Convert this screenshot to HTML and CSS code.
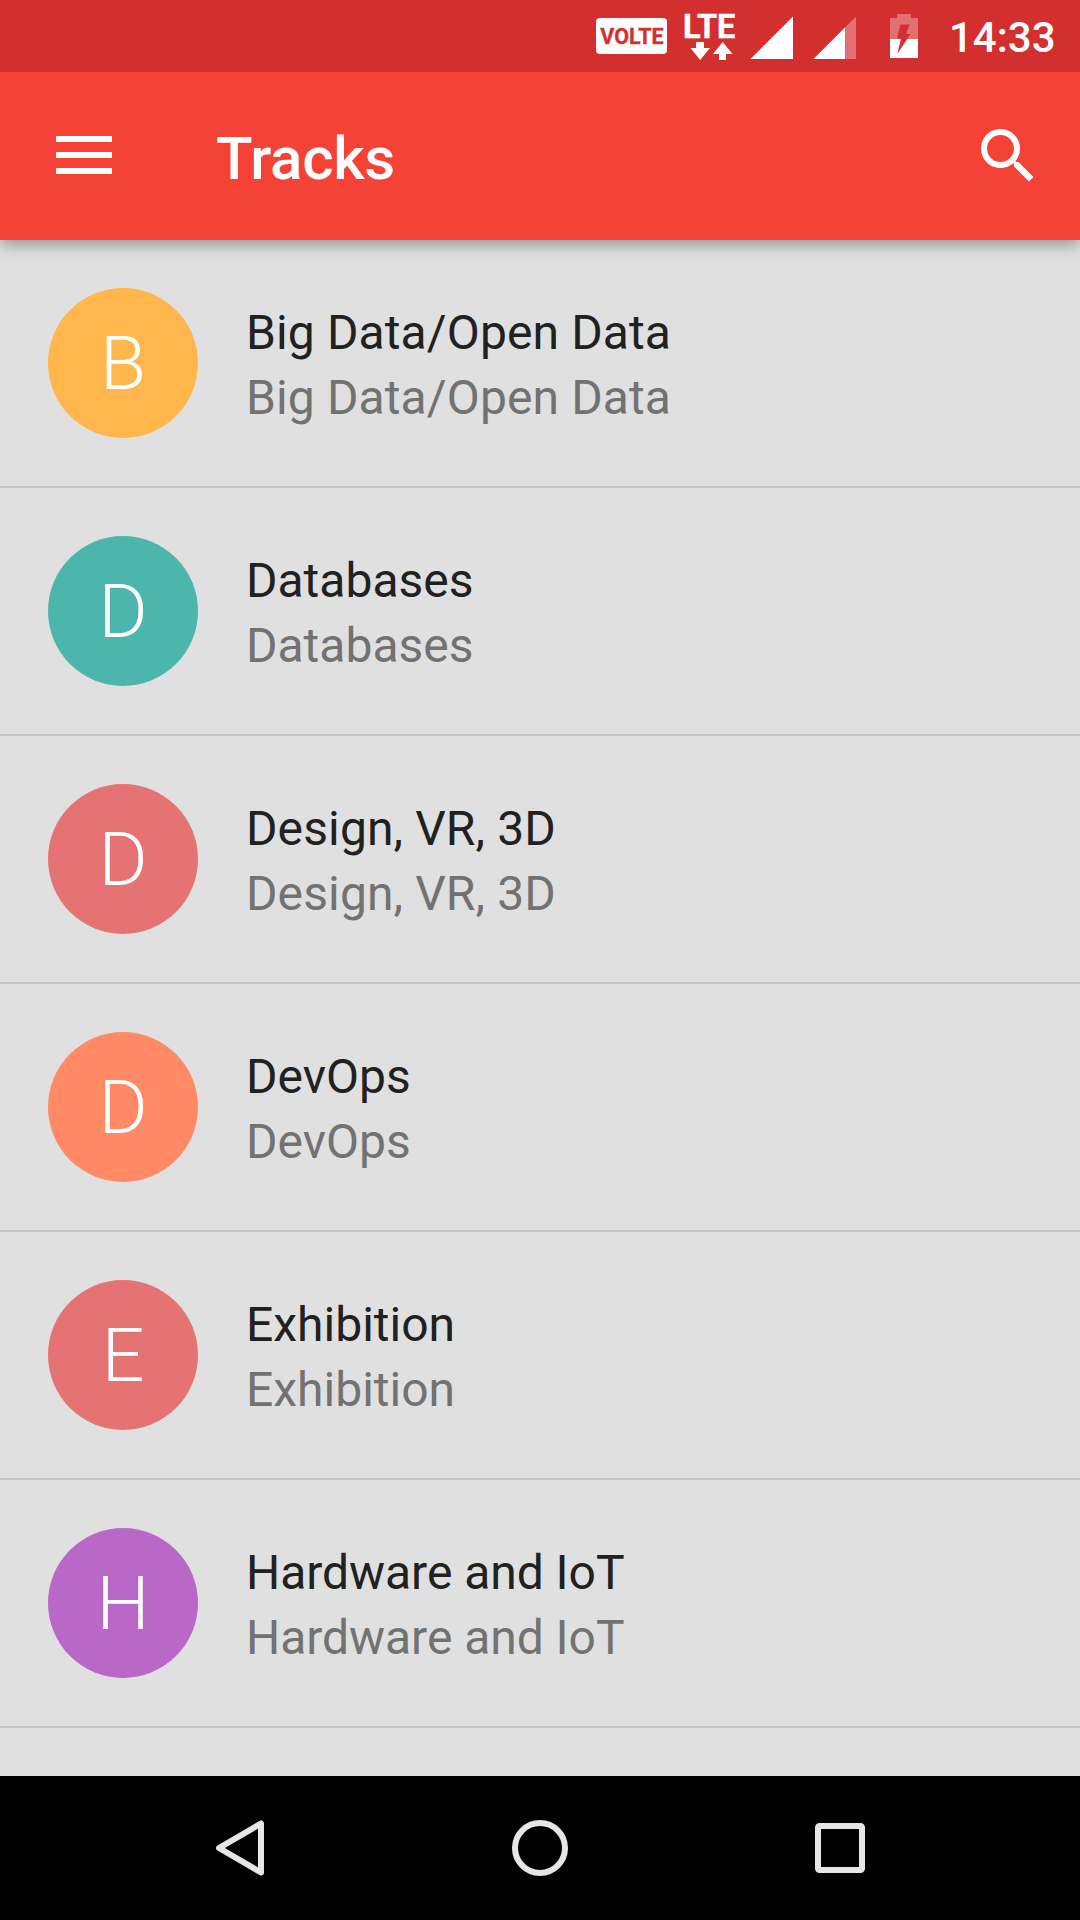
FILE: index.html
```html
<!DOCTYPE html>
<html lang="en">
<head>
<meta charset="utf-8">
<title>Tracks</title>
<link rel="stylesheet" href="styles.css">
</head>
<body>
<div class="screen">
  <div class="status-bar">
    <span class="volte">VOLTE</span>
    <div class="lte">
      <span class="lte-label">LTE</span>
      <svg class="lte-arrows" width="43" height="18" viewBox="0 0 43 18"><path d="M6 0h8v6h6L10.200 18 0.500 6H6zM32.700 0L42.500 12H36v6h-7v-6h-6z" fill="#fff"/></svg>
    </div>
    <svg class="signal" width="43" height="43" viewBox="0 0 43 43"><path d="M0.500 43L43 0.500V43z" fill="#fff"/></svg>
    <svg class="signal-partial" width="43" height="43" viewBox="0 0 43 43"><path d="M0.500 43L43 0.500V43z" fill="#e27071"/><path d="M0.500 43L32 11.500V43z" fill="#fff"/></svg>
    <svg class="battery" width="28" height="44" viewBox="0 0 28 44"><path d="M7 0h14v4h7v21H0V4h7z" fill="#e27071"/><path d="M0 25h28v19H0z" fill="#fff"/><path d="M10.500 10.500h9L16 20h4.500L7.300 40l3.700-15.500H7z" fill="#d32f2f"/></svg>
    <span class="clock">14:33</span>
  </div>
  <header class="app-bar">
    <svg class="menu" width="56" height="38" viewBox="0 0 56 38"><path d="M0 0h56v6H0zM0 16h56v6H0zM0 32h56v6H0z" fill="#fff"/></svg>
    <h1 class="title">Tracks</h1>
    <svg class="search" width="72" height="72" viewBox="0 0 24 24"><path d="M15.500 14h-.79l-.28-.27C15.410 12.590 16 11.110 16 9.500 16 5.910 13.090 3 9.500 3S3 5.910 3 9.500 5.910 16 9.500 16c1.610 0 3.090-.59 4.230-1.570l.27.28v.79l5 4.990L20.490 19l-4.990-5zm-6 0C7.010 14 5 11.990 5 9.500S7.010 5 9.500 5 14 7.010 14 9.500 11.990 14 9.500 14z" fill="#fff"/></svg>
  </header>
  <main class="list">
    <div class="row"><div class="avatar amber">B</div><div class="text wide">
      <div class="name">Big Data/Open Data</div><div class="desc">Big Data/Open Data</div></div></div>
    <div class="row"><div class="avatar teal">D</div><div class="text"><div class="name">Databases</div><div class="desc">Databases</div></div></div>
    <div class="row"><div class="avatar red">D</div><div class="text wide"><div class="name">Design, VR, 3D</div><div class="desc">Design, VR, 3D</div></div></div>
    <div class="row"><div class="avatar orange">D</div><div class="text"><div class="name">DevOps</div><div class="desc">DevOps</div></div></div>
    <div class="row"><div class="avatar red">E</div><div class="text"><div class="name">Exhibition</div><div class="desc">Exhibition</div></div></div>
    <div class="row"><div class="avatar purple">H</div><div class="text tight"><div class="name">Hardware and IoT</div><div class="desc">Hardware and IoT</div></div></div>
  </main>
  <nav class="nav-bar">
    <svg width="60" height="60" viewBox="0 0 60 60"><path d="M51 5.500v49L9 30z"/></svg>
    <svg width="60" height="60" viewBox="0 0 60 60"><circle cx="30" cy="30" r="25"/></svg>
    <svg width="60" height="60" viewBox="0 0 60 60"><rect x="8" y="8" width="44" height="44" rx="1.500"/></svg>
  </nav>
</div>
</body>
</html>
```
FILE: styles.css
```css
* { box-sizing: border-box; }

body {
  margin: 0;
  font-family: Roboto, sans-serif;
}

svg { display: block; flex: none; }

.screen {
  display: flex;
  flex-direction: column;
  width: 1080px;
  height: 1920px;
  overflow: hidden;
  background: #e0e0e0;
}

.status-bar {
  position: relative;
  z-index: 2;
  display: flex;
  flex: none;
  height: 72px;
  padding-left: 596px;
  background: #d32f2f;
  color: #fff;
}

.volte {
  width: 71px;
  height: 36px;
  margin-top: 18px;
  padding-left: 1px;
  border-radius: 4px;
  background: #fff;
  color: #d32f2f;
  font-size: 21.5px;
  font-weight: 700;
  line-height: 37px;
  text-align: center;
  -webkit-text-stroke: 0.3px #d32f2f;
}

.lte {
  width: 54px;
  margin: 11px 0 0 16px;
}

.lte-label {
  display: block;
  height: 31px;
  font-size: 32.5px;
  font-weight: 700;
  line-height: 32px;
  -webkit-text-stroke: 0.4px #fff;
}

.lte-arrows { margin-left: 7px; }

.signal { margin: 16px 0 0 13px; }
.signal-partial { margin: 16px 0 0 20px; }
.battery { margin: 14px 0 0 34px; }

.clock {
  margin-left: 31px;
  font-size: 42px;
  font-weight: 500;
  line-height: 75px;
}

.app-bar {
  position: relative;
  display: flex;
  align-items: center;
  flex: none;
  height: 168px;
  padding: 0 36px 0 56px;
  background: #f44336;
  color: #fff;
  box-shadow: 0 6px 14px -1px rgba(0, 0, 0, 0.34);
}

.menu { margin-bottom: 2px; }

.title {
  flex: 1;
  margin: 6px 0 0 104px;
  font-size: 60px;
  font-weight: 500;
  letter-spacing: -0.25px;
  line-height: 72px;
}

.list { flex: 1; }

.row {
  display: flex;
  height: 248px;
  padding: 48px;
  border-bottom: 2px solid #c4c4c4;
}

.avatar {
  flex: none;
  width: 150px;
  height: 150px;
  border-radius: 50%;
  color: #fff;
  font-size: 75px;
  font-weight: 300;
  line-height: 150px;
  text-align: center;
}

.amber { background: #ffb74d; }
.teal { background: #4db6ac; }
.red { background: #e57373; }
.orange { background: #ff8a65; }
.purple { background: #ba68c8; }

.text {
  margin: 12px 0 0 48px;
  font-size: 48px;
  line-height: 65px;
  white-space: nowrap;
}

.wide { letter-spacing: 0.12px; }
.tight { letter-spacing: -0.05px; }

.name { color: #212121; }
.desc { color: #727272; }

.nav-bar {
  display: flex;
  align-items: center;
  justify-content: center;
  gap: 240px;
  flex: none;
  height: 144px;
  background: #000;
}

.nav-bar svg {
  fill: none;
  stroke: #e6e6e6;
  stroke-width: 6;
  stroke-linejoin: round;
}
```
